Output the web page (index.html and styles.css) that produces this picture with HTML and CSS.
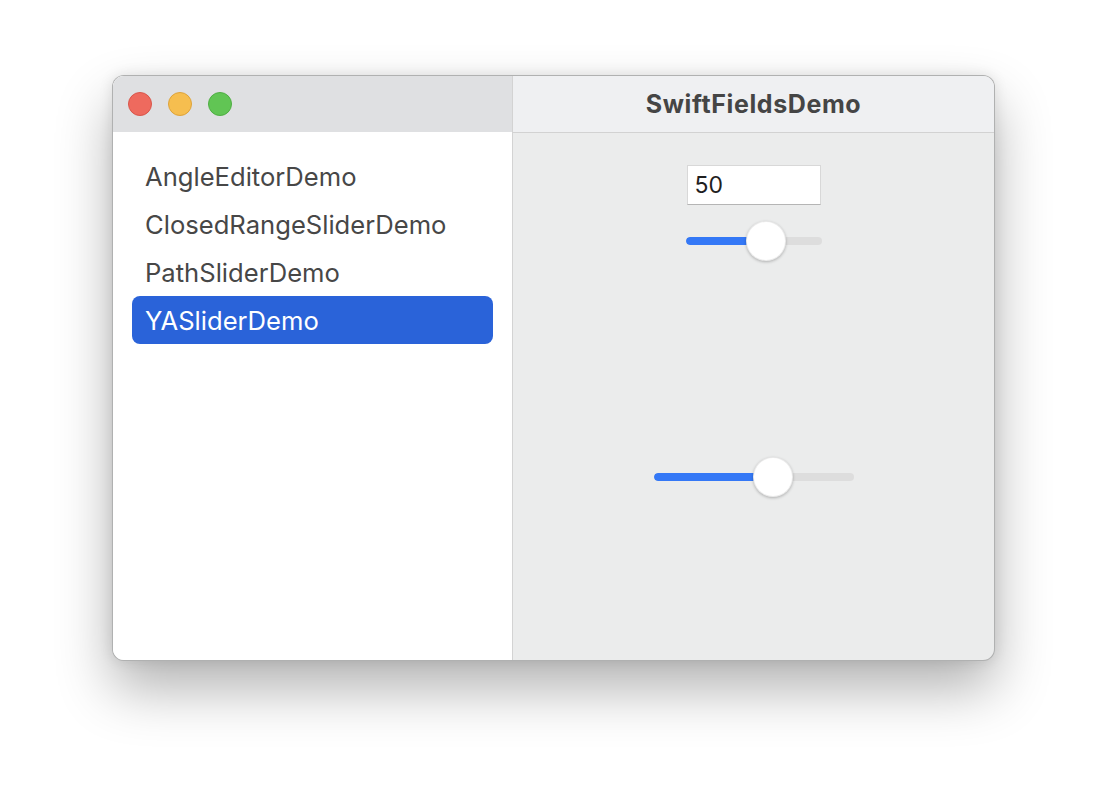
FILE: index.html
```html
<!DOCTYPE html>
<html>
<head>
<meta charset="utf-8">
<link rel="stylesheet" href="styles.css">
</head>
<body>
<div class="page">
  <div class="window">
    <aside class="sidebar">
      <div class="side-titlebar">
        <span class="light red"></span>
        <span class="light yellow"></span>
        <span class="light green"></span>
      </div>
      <ul class="list">
        <li class="row">AngleEditorDemo</li>
        <li class="row">ClosedRangeSliderDemo</li>
        <li class="row">PathSliderDemo</li>
        <li class="row selected">YASliderDemo</li>
      </ul>
    </aside>
    <main class="detail">
      <div class="titlebar">SwiftFieldsDemo</div>
      <div class="content">
        <div class="field">50</div>
        <div class="slider small">
          <div class="track"><div class="fill" style="width:80px"></div></div>
          <div class="knob" style="left:60px"></div>
        </div>
        <div class="slider large">
          <div class="track"><div class="fill" style="width:119px"></div></div>
          <div class="knob" style="left:99px"></div>
        </div>
      </div>
    </main>
  </div>
</div>
</body>
</html>
```
FILE: styles.css
```css
html, body {
  margin: 0;
  padding: 0;
  background: #ffffff;
}
body {
  font-family: Inter, "Liberation Sans", sans-serif;
}
.page {
  padding: 75px 0 0 112px;
  min-height: 808px;
  box-sizing: border-box;
}
.window {
  width: 883px;
  height: 586px;
  box-sizing: border-box;
  display: flex;
  border-radius: 12px;
  overflow: hidden;
  border: 1px solid rgba(0,0,0,0.25);
  box-shadow: 0 28px 55px rgba(0,0,0,0.30), 0 0 14px rgba(0,0,0,0.10);
  background: #ebecec;
}
.sidebar {
  width: 399px;
  flex: none;
  background: #ffffff;
  border-right: 1px solid #d3d3d3;
  display: flex;
  flex-direction: column;
}
.side-titlebar {
  height: 56px;
  background: #dfe0e2;
  display: flex;
  align-items: center;
  gap: 16px;
  padding-left: 15px;
}
.light {
  width: 24px;
  height: 24px;
  border-radius: 50%;
  box-sizing: border-box;
}
.red { background: #ee6a5e; border: 1px solid #d9564b; }
.yellow { background: #f6be4f; border: 1px solid #dea33a; }
.green { background: #61c554; border: 1px solid #4fae43; }
.list {
  list-style: none;
  margin: 0;
  padding: 20px 19px 0 19px;
}
.row {
  height: 48px;
  display: flex;
  align-items: center;
  padding-left: 13px;
  font-size: 25.6px;
  color: #474747;
  border-radius: 8px;
  letter-spacing: 0;
}
.row.selected {
  background: #2a63d9;
  color: #ffffff;
}
.detail {
  flex: 1;
  display: flex;
  flex-direction: column;
}
.titlebar {
  height: 56px;
  background: #eff0f2;
  border-bottom: 1px solid #d2d2d2;
  display: flex;
  align-items: center;
  justify-content: center;
  font-size: 25px;
  font-weight: 700;
  letter-spacing: 0.6px;
  color: #454545;
}
.content {
  flex: 1;
  display: flex;
  flex-direction: column;
  align-items: center;
  padding-top: 32px;
}
.field {
  width: 134px;
  height: 40px;
  box-sizing: border-box;
  background: #ffffff;
  border: 1px solid #d8d8d8;
  border-bottom-color: #b5b5b5;
  font-size: 23px;
  color: #1f1f1f;
  padding-left: 7px;
  display: flex;
  align-items: center;
}
.slider {
  position: relative;
  height: 40px;
  display: flex;
  align-items: center;
}
.slider.small {
  width: 136px;
  margin-top: 16px;
}
.slider.large {
  width: 200px;
  margin-top: 196px;
}
.track {
  width: 100%;
  height: 8px;
  border-radius: 4px;
  background: #dddddd;
  overflow: hidden;
}
.fill {
  height: 100%;
  background: #3478f6;
  border-radius: 4px;
}
.knob {
  position: absolute;
  top: 0;
  width: 40px;
  height: 40px;
  box-sizing: border-box;
  border-radius: 50%;
  background: #ffffff;
  border: 1px solid rgba(0,0,0,0.08);
  box-shadow: 0 1px 3px rgba(0,0,0,0.25);
}
```
